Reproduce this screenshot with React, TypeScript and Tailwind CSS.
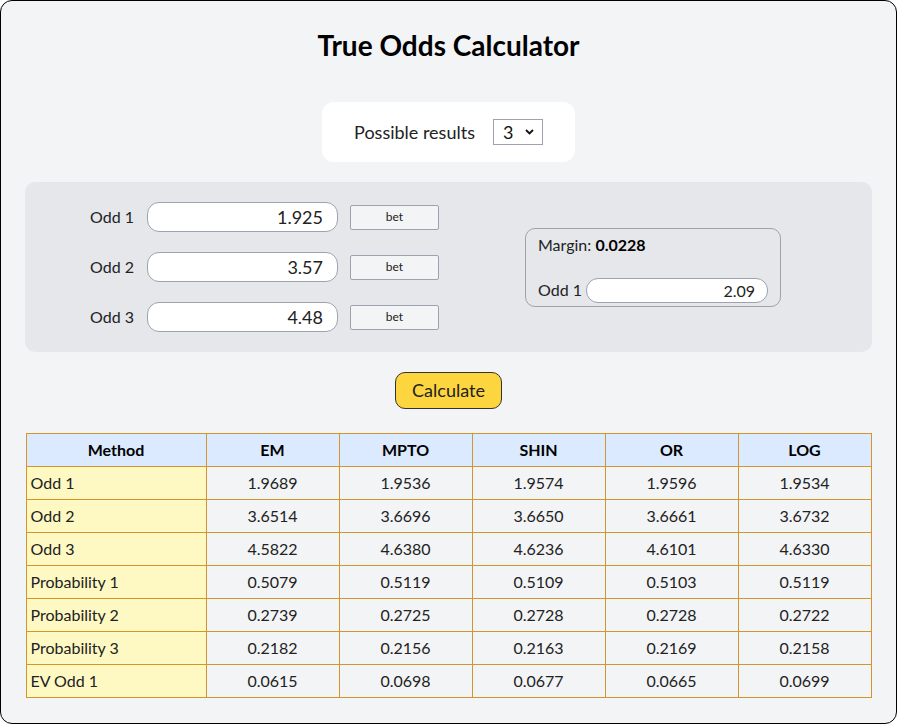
import React, { useState } from 'react';

const font = { fontFamily: 'Lato, "Noto Sans", sans-serif' };

type Row = { label: string; values: string[] };

const methods = ['EM', 'MPTO', 'SHIN', 'OR', 'LOG'];

const rows: Row[] = [
  { label: 'Odd 1', values: ['1.9689', '1.9536', '1.9574', '1.9596', '1.9534'] },
  { label: 'Odd 2', values: ['3.6514', '3.6696', '3.6650', '3.6661', '3.6732'] },
  { label: 'Odd 3', values: ['4.5822', '4.6380', '4.6236', '4.6101', '4.6330'] },
  { label: 'Probability 1', values: ['0.5079', '0.5119', '0.5109', '0.5103', '0.5119'] },
  { label: 'Probability 2', values: ['0.2739', '0.2725', '0.2728', '0.2728', '0.2722'] },
  { label: 'Probability 3', values: ['0.2182', '0.2156', '0.2163', '0.2169', '0.2158'] },
  { label: 'EV Odd 1', values: ['0.0615', '0.0698', '0.0677', '0.0665', '0.0699'] },
];

const App: React.FC = () => {
  const [results, setResults] = useState('3');
  const [odds, setOdds] = useState(['1.925', '3.57', '4.48']);

  // update one odd input
  const setOdd = (index: number, value: string) => {
    const next = [...odds];
    next[index] = value;
    setOdds(next);
  };

  return (
    <div className="bg-white" style={font}>
      <div className="box-border flex h-[724px] w-[897px] flex-col items-center rounded-[12px] border border-black bg-[#f3f4f6] px-6 text-[#111]">
        <h1 className="pt-[26px] text-[28px] font-bold leading-9 text-black">True Odds Calculator</h1>

        {/* results selector */}
        <div className="mt-[39px] flex h-[60px] items-center gap-[18px] rounded-xl bg-white px-8">
          <span className="text-[18px] text-[#222]">Possible results</span>
          <div className="relative">
            <select
              value={results}
              onChange={(e) => setResults(e.target.value)}
              className="h-[26px] w-[50px] appearance-none border border-[#9ca3af] bg-white pl-[9px] text-[18px] leading-none outline-none"
              style={font}
            >
              <option value="2">2</option>
              <option value="3">3</option>
              <option value="4">4</option>
            </select>
            <svg className="pointer-events-none absolute right-[9px] top-[10px]" width="9" height="6" viewBox="0 0 9 6">
              <path d="M1 1l3.5 3.5L8 1" fill="none" stroke="#111" strokeWidth="1.8" />
            </svg>
          </div>
        </div>

        {/* odds panel */}
        <div className="mt-5 flex w-full items-center rounded-[10px] bg-[#e5e7eb] py-5 pl-[40px]">
          <div className="flex flex-col gap-5">
            {odds.map((odd, i) => (
              <div key={i} className="flex items-center">
                <span className="w-[69px] text-right text-[16px] text-[#222]">Odd {i + 1}</span>
                <input
                  value={odd}
                  onChange={(e) => setOdd(i, e.target.value)}
                  className="ml-[13px] h-[30px] w-[191px] rounded-[12px] border border-[#9ca3af] bg-white px-[14px] text-right text-[18px] text-[#222] outline-none"
                  style={font}
                />
                <button className="ml-[12px] h-[25px] w-[89px] rounded-[2px] border border-[#9ca3af] bg-[#f3f4f6] text-[12px] text-[#222]">
                  bet
                </button>
              </div>
            ))}
          </div>

          <div className="ml-[86px] flex w-[256px] flex-col rounded-[10px] border border-[#9ca3af] px-3 pb-[3px] pt-1">
            <div className="text-[16px] leading-6 text-[#222]">
              Margin: <b className="text-black">0.0228</b>
            </div>
            <div className="mt-[21px] flex items-center gap-1">
              <span className="shrink-0 whitespace-nowrap text-[16px] text-[#222]">Odd 1</span>
              <input
                readOnly
                value="2.09"
                className="h-[25px] w-0 min-w-0 flex-1 rounded-[12px] border border-[#9ca3af] bg-white px-[12px] text-right text-[16px] text-[#222] outline-none"
                style={font}
              />
            </div>
          </div>
        </div>

        <button className="mt-5 h-[37px] rounded-[10px] border border-[#333] bg-[#fcd53f] px-4 text-[18px] text-[#222]">
          Calculate
        </button>

        {/* results table */}
        <table className="mt-[24px] w-[846px] border-collapse text-[16px]">
          <thead>
            <tr className="h-[33px] bg-[#dbeafe]">
              <th className="w-[180px] border border-[#d4952c] font-bold text-black">Method</th>
              {methods.map((m) => (
                <th key={m} className="w-[133px] border border-[#d4952c] font-bold text-black">
                  {m}
                </th>
              ))}
            </tr>
          </thead>
          <tbody>
            {rows.map((row) => (
              <tr key={row.label} className="h-[33px]">
                <td className="border border-[#d4952c] bg-[#fef9c3] px-1 text-left text-[#222]">{row.label}</td>
                {row.values.map((v, i) => (
                  <td key={i} className="border border-[#d4952c] text-center text-[#222]">
                    {v}
                  </td>
                ))}
              </tr>
            ))}
          </tbody>
        </table>
      </div>
    </div>
  );
};

export default App;
